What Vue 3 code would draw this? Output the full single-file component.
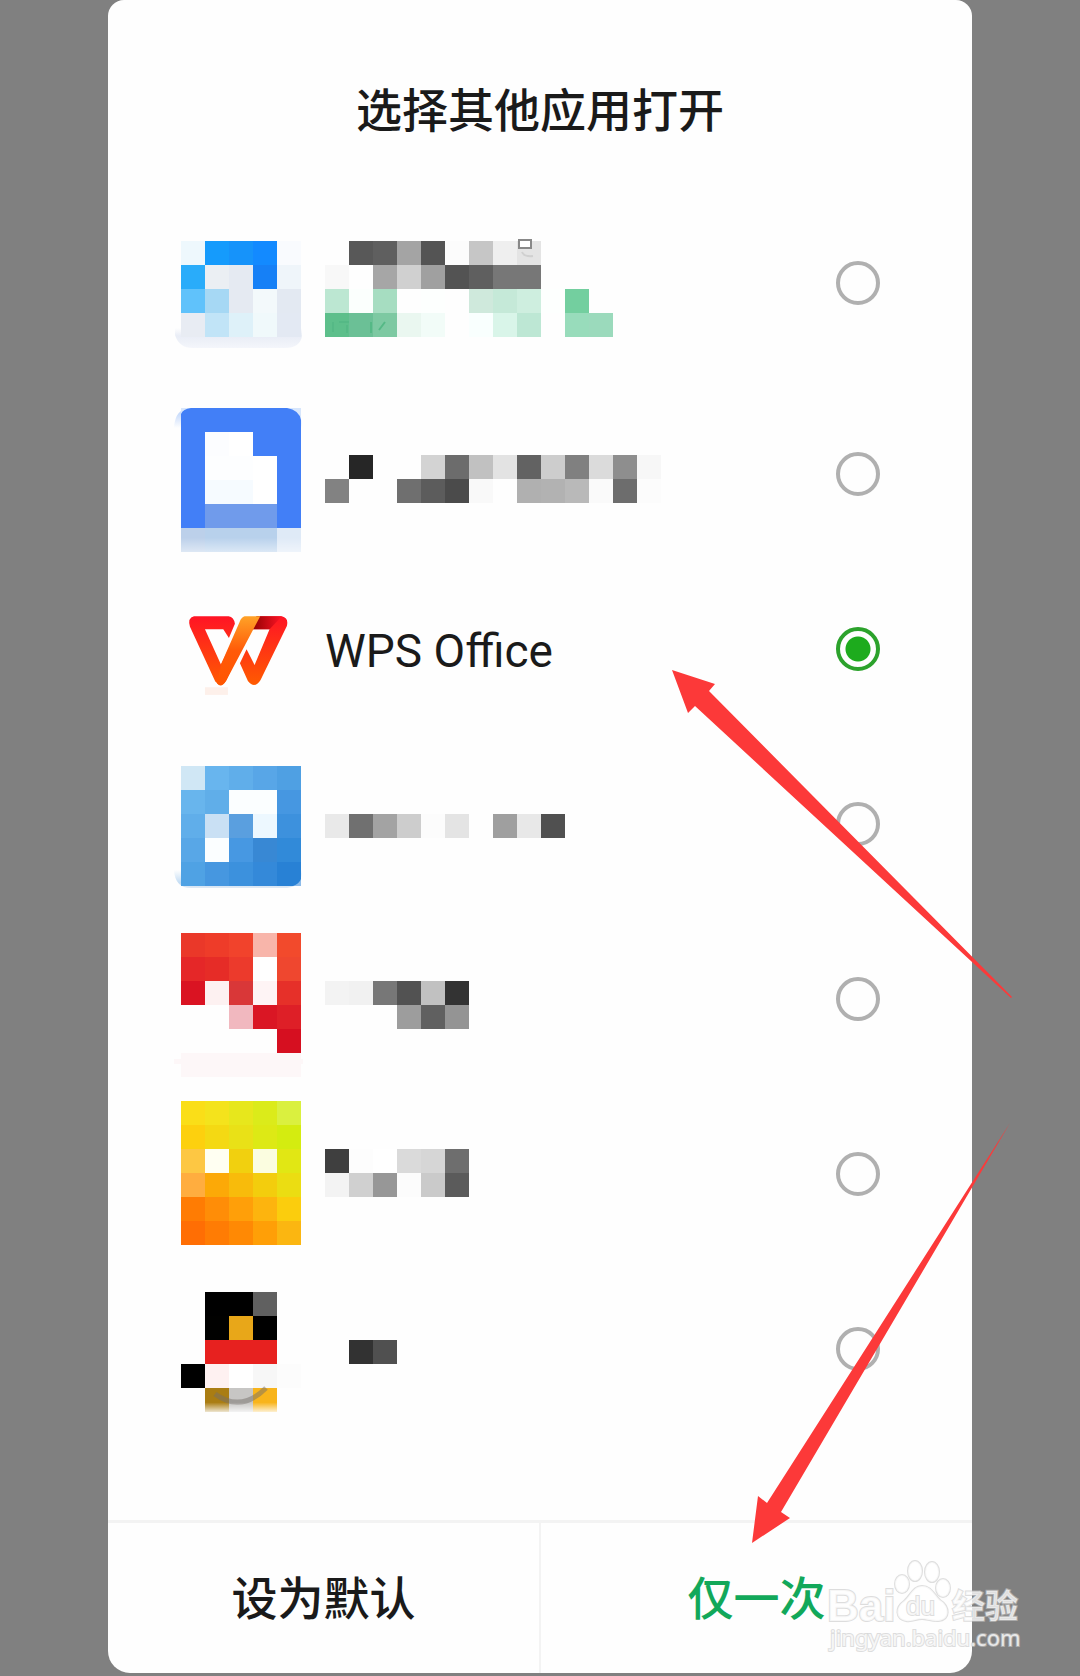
<template>
  <div class="page">
    <form class="dialog" @submit.prevent>
      <h1 class="title">选择其他应用打开</h1>
      <div class="list">
        <label v-for="app in apps" :key="app.id" class="row" :class="{ tall: app.tall }">
          <svg class="icon" :viewBox="`0 0 144 ${app.tall ? 206 : 175}`" aria-hidden="true">
            <defs>
              <linearGradient id="wpsRed" x1="0" y1="0" x2="0" y2="1">
                <stop offset="0" stop-color="#ff1425" />
                <stop offset="1" stop-color="#ff5b00" />
              </linearGradient>
              <linearGradient id="wpsGold" x1="0" y1="0" x2="0" y2="1">
                <stop offset="0" stop-color="#ffa227" />
                <stop offset="0.5" stop-color="#ff5a08" />
                <stop offset="1" stop-color="#ff5500" />
              </linearGradient>
              <linearGradient id="wpsDark" x1="0" y1="0" x2="1" y2="0">
                <stop offset="0" stop-color="#8c0000" />
                <stop offset="1" stop-color="#ff1425" />
              </linearGradient>
              <linearGradient id="softBlue" x1="0" y1="0" x2="0" y2="1">
                <stop offset="0" stop-color="#fefefe" />
                <stop offset="0.4" stop-color="#e9edf6" />
                <stop offset="1" stop-color="#f4f6fb" />
              </linearGradient>
              <linearGradient id="fadeDown" x1="0" y1="0" x2="0" y2="1">
                <stop offset="0.3" stop-color="#c9dcfb" />
                <stop offset="1" stop-color="#fefefe" />
              </linearGradient>
              <linearGradient id="fadeUp" x1="0" y1="0" x2="0" y2="1">
                <stop offset="0" stop-color="#fefefe" />
                <stop offset="0.7" stop-color="#c4ddf4" />
                <stop offset="1" stop-color="#dfe9f4" />
              </linearGradient>
              <linearGradient id="feet" x1="0" y1="0" x2="0" y2="1">
                <stop offset="0.6" stop-color="#fff" stop-opacity="0" />
                <stop offset="1" stop-color="#fff" stop-opacity="0.8" />
              </linearGradient>
              <linearGradient id="base" x1="0" y1="0" x2="0" y2="1">
                <stop offset="0.4" stop-color="#fff" stop-opacity="0" />
                <stop offset="1" stop-color="#fff" stop-opacity="0.5" />
              </linearGradient>
            </defs>
            <path v-if="app.id === 1" d="M6 148H133V156Q131 168 116 168H24Q10 168 6 155Z" fill="url(#softBlue)" />
            <path v-if="app.id === 2" d="M5 42Q6 22 22 22H120Q133 24 133 42Z" fill="url(#fadeDown)" />
            <path v-if="app.id === 4" d="M5 134Q6 152 22 152H118Q133 150 133 134Z" fill="url(#fadeUp)" />
            <path v-if="app.id === 5" d="M12 142H132V148H134V153H132V166H12V153H5V148H12Z" fill="#fdf7f8" />
            <template v-for="(line, r) in app.icon" :key="r">
              <template v-for="(color, c) in line.split(' ')" :key="c">
                <rect
                  v-if="color !== '-'"
                  :x="12 + c * 24"
                  :y="app.iconTop + r * 24"
                  width="24"
                  height="24"
                  :fill="'#' + color"
                  shape-rendering="crispEdges"
                />
              </template>
            </template>
            <g v-if="app.id === 2">
              <path d="M12 22H22Q14 23 12 28Z M132 22H118Q130 24 132 34Z" fill="#d7e6fc" />
              <path d="M12 142H132V166H12Z" fill="url(#base)" />
            </g>
            <path v-if="app.id === 4" d="M132 143V150H124Q130 148 132 143Z" fill="#8dbbe9" />
            <g v-if="app.id === 3" transform="translate(-9 29) scale(0.333)">
              <path d="M135 292H204V315H135Z" fill="#fdf0ea" />
              <path
                d="M102 79H206Q222 82 225 101L207 144L190 118H135L183 224L207 175L226 213L199 272Q184 297 166 275L90 110Q82 84 102 79Z"
                fill="url(#wpsRed)"
              />
              <path
                d="M290 79H366Q387 84 381 108L302 270Q284 299 264 273L240 220L260 178L284 225L329 118H273Z"
                fill="url(#wpsRed)"
              />
              <path d="M290 79H366L329 118H273Z" fill="url(#wpsDark)" />
              <path d="M254 79H301L199 272Q184 297 171 280L183 224L239 96Q244 82 254 79Z" fill="url(#wpsGold)" />
            </g>
            <g v-if="app.id === 7">
              <path d="M46 133Q72 152 97 127" fill="none" stroke="#75706a" stroke-width="5" opacity="0.5" />
              <path d="M36 127H108V151H36Z" fill="url(#feet)" />
            </g>
          </svg>
          <span v-if="app.name" class="name">{{ app.name }}</span>
          <svg v-else class="blocks" :viewBox="`0 0 360 ${app.tall ? 206 : 175}`" aria-hidden="true">
            <template v-for="(line, r) in app.label" :key="r">
              <template v-for="(color, c) in line.split(' ')" :key="c">
                <rect
                  v-if="color !== '-'"
                  :x="c * 24"
                  :y="app.labelTop + r * 24"
                  width="24"
                  height="24"
                  :fill="'#' + color"
                  shape-rendering="crispEdges"
                />
              </template>
            </template>
            <g v-if="app.id === 1" fill="none">
              <path d="M194 60H206V68H194Z" fill="#fff" stroke="#888" stroke-width="2" />
              <path d="M197 72Q199 77 208 76" stroke="#d0d0d0" stroke-width="2" />
              <path d="M8 142V152M14 142H24M22 145V153M46 142V153M60 142L54 150" stroke="#55b986" stroke-width="2" />
            </g>
          </svg>
          <input v-model="selected" class="radio" type="radio" name="app" :value="app.id" :aria-label="app.name || '应用 ' + app.id" />
        </label>
      </div>
      <div class="actions">
        <button type="button">设为默认</button>
        <button type="submit" class="once">仅一次</button>
      </div>
    </form>

    <svg class="overlay" viewBox="0 0 1080 1676" aria-hidden="true">
      <g fill="#fc3939">
        <path d="M672 670L715 684L709 691L1012 997L1011 998L695 706L688 713Z" />
        <path d="M752 1543L758 1496L767 1503L1010 1123L781 1512L790 1518Z" />
      </g>
      <g class="mark">
        <text x="827" y="1621" class="mark-brand">Bai</text>
        <ellipse cx="902" cy="1584" rx="7" ry="9" />
        <ellipse cx="915" cy="1571" rx="7" ry="10" />
        <ellipse cx="932" cy="1572" rx="7" ry="10" />
        <ellipse cx="943" cy="1588" rx="7" ry="9" />
        <path d="M922 1586C931 1586 934 1594 940 1600C950 1606 951 1620 938 1621C930 1621 927 1619 922 1619C916 1619 913 1622 906 1621C895 1619 895 1607 904 1601C911 1595 913 1586 922 1586Z" />
        <text x="906" y="1615" class="mark-du">du</text>
        <text x="952" y="1618" class="mark-cn">经验</text>
        <text x="830" y="1646" class="mark-url">jingyan.baidu.com</text>
      </g>
    </svg>
  </div>
</template>

<script setup>
import { ref } from 'vue'

const selected = ref(3)

// each string is one line of 24px blocks, "-" leaves a gap
const apps = [
  {
    id: 1,
    tall: true,
    iconTop: 61,
    icon: [
      'eef8fd 159bfc 1693fa 138aff f9fbfe',
      '29acfa ebeff3 e5eaf2 1680f6 eff5fa',
      '60c2fb a6d8f4 e5eaf2 f3f9fb e3e9f2',
      'e8ecf3 c1e4f7 def1f9 f0f9fb e3e9f3'
    ],
    labelTop: 61,
    label: [
      '- 585858 5f5f5f a4a4a4 545454 fcfcfc c6c6c6 efefef e4e4e4',
      'f8f8f8 - a6a6a6 d0d0d0 a0a0a0 535353 5f5f5f 777777 777777',
      'bce7d2 fbfffd a6ddc1 - fdfffe - cfe9dc c5e9d8 ceeedf fdfffe 73cf9f',
      '5dbf8b 6bc096 7dc9a2 eaf7f0 f2fcf8 - f9fffe d9f5e9 bde7d4 - 98dcbb 9bdabc'
    ]
  },
  {
    id: 2,
    iconTop: 22,
    icon: [
      '427ff7 427ff7 427ff7 427ff7 427ff7',
      '427ff7 fcfdff ffffff 427ff7 427ff7',
      '427ff7 fdfeff fdfeff ffffff 427ff7',
      '427ff7 f6fbff f6fbff ffffff 427ff7',
      '427ff7 709beb 709beb 709beb 427ff7',
      'bcd0ea b8d1ec b8d1ec b8d1ec dfeaf7'
    ],
    labelTop: 69,
    label: [
      '- 262626 - - d3d3d3 6c6c6c c1c1c1 e3e3e3 626262 cdcdcd 808080 dbdbdb 8e8e8e f7f7f7',
      '828282 - - 6f6f6f 5c5c5c 4b4b4b f9f9f9 - b0b0b0 b2b2b2 b9b9b9 fafafa 6d6d6d fcfcfc'
    ]
  },
  { id: 3, name: 'WPS Office' },
  {
    id: 4,
    iconTop: 30,
    icon: [
      'd0e7f5 68b5ee 60aeea 58a6e7 4fa0e3',
      '68b5ed 60aee9 fbfeff fbfeff 4697e1',
      '60aeea c9e0f4 5a9fdf edf8ff 3d91dd',
      '58a7e7 fbfeff 4798e2 3888d4 318ad9',
      '4fa2e4 4697e0 3c91dd 3489d9 2881d5'
    ],
    labelTop: 78,
    label: ['e9e9e9 707070 a3a3a3 cdcdcd fcfcfc e4e4e4 - 9f9f9f e8e8e8 505050']
  },
  {
    id: 5,
    iconTop: 22,
    icon: [
      'ea3829 ee3c29 f1432c f8b5aa f24a2c',
      'e52728 e62c27 ec3a2c ffffff ef472f',
      'da1322 fdf1f1 d93738 fef4f5 e63029',
      '- - f1b8bf da1624 de1f27',
      '- - - - d60f20'
    ],
    labelTop: 70,
    label: [
      'f3f3f3 f1f1f1 777777 525252 c1c1c1 333333',
      '- - - 9d9d9d 606060 949494'
    ]
  },
  {
    id: 6,
    iconTop: 15,
    icon: [
      'fade18 f4e31c e7e71c dbeb1a daf03f',
      'fdd00e f4d913 e9e117 dde915 d4ec10',
      'fdc743 fffff2 f1d00f fbfde0 e1e714',
      'ffad3f fca907 f8bb0b f3cd0d ebdd12',
      'ff7c03 ff8d07 ff9f09 fdb40e fbcd0d',
      'ff6e04 ff7c04 ff8904 ff9f07 fbb611'
    ],
    labelTop: 63,
    label: [
      '3f3f3f fdfdfd ffffff dadada d6d6d6 6e6e6e',
      'f3f3f3 d0d0d0 979797 fcfcfc cacaca 5b5b5b'
    ]
  },
  {
    id: 7,
    iconTop: 31,
    icon: [
      '- 000000 000000 606060',
      '- 010100 e8a719 000000',
      '- e7211f e7211f e7211f',
      '000000 fef1f1 ffffff f7f7f7 fcfcfc',
      '- aa7d13 c7c6c4 f8b41b'
    ],
    labelTop: 79,
    label: ['- 323232 505050']
  }
]
</script>

<style>
body {
  margin: 0;
  background: #808080;
}
</style>

<style scoped>
.page {
  position: relative;
  padding-bottom: 3px;
  font-family: Roboto, "Noto Sans CJK SC", sans-serif;
  color: #1a1a1a;
}
.dialog {
  width: 80%;
  margin: 0 auto;
  background: #fefefe;
  border-radius: 16px 16px 22px 22px;
  overflow: hidden;
}
.title {
  margin: 0;
  padding: 77px 0 35px;
  font-size: 46px;
  line-height: 68px;
  font-weight: 500;
  text-align: center;
}
.list {
  padding-bottom: 84px;
}
.row {
  display: flex;
  align-items: center;
  height: 175px;
  padding: 0 92px 0 61px;
  cursor: pointer;
}
.row.tall {
  height: 206px;
}
.icon {
  flex: none;
  width: 144px;
  height: 100%;
  margin-right: 12px;
}
.blocks {
  flex: none;
  width: 360px;
  height: 100%;
}
.name {
  padding-top: 4px;
  font-size: 46px;
  line-height: 60px;
}
.radio {
  flex: none;
  appearance: none;
  box-sizing: border-box;
  width: 44px;
  height: 44px;
  margin: 0 0 0 auto;
  border: 4px solid #b0b0b0;
  border-radius: 50%;
}
.radio:checked {
  border-color: #2ca22c;
  background: radial-gradient(circle, #1dab1d 12px, transparent 13px);
}
.actions {
  display: flex;
  border-top: 3px solid #f3f3f3;
}
.actions button {
  flex: 1;
  padding: 42px 0 40px;
  border: none;
  background: none;
  font-family: inherit;
  font-size: 46px;
  line-height: 68px;
  font-weight: 500;
  color: #1a1a1a;
  cursor: pointer;
}
.actions .once {
  border-left: 2px solid #f3f3f3;
  color: #12a85a;
}
.overlay {
  position: absolute;
  top: 0;
  left: 0;
  width: 100%;
  pointer-events: none;
}
.mark {
  fill: rgba(255, 255, 255, 0.75);
  stroke: rgba(200, 200, 200, 0.6);
  stroke-width: 2px;
  paint-order: stroke;
}
.mark-brand {
  font: bold 44px "Liberation Sans", sans-serif;
}
.mark-du {
  font: 26px "Liberation Sans", sans-serif;
}
.mark-cn {
  font: bold 33px "Noto Sans CJK SC", sans-serif;
}
.mark-url {
  font: 22px "Noto Sans", sans-serif;
}
</style>
